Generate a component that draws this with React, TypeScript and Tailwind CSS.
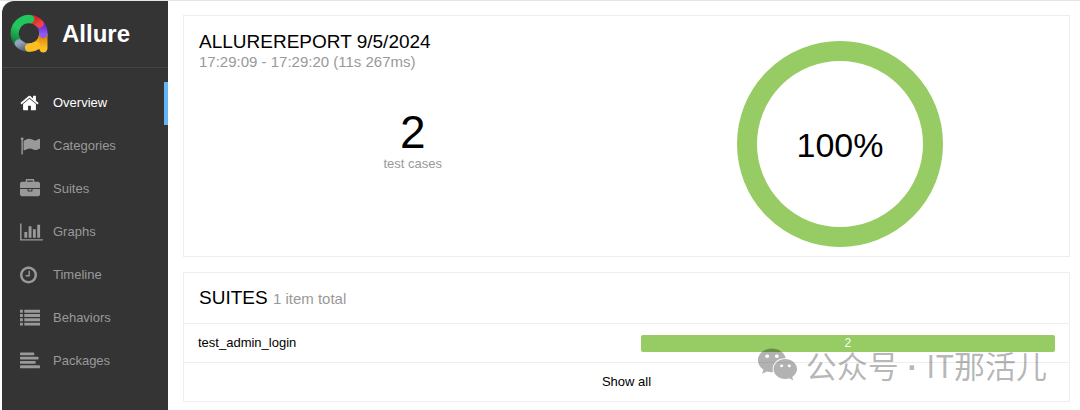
import React from 'react';
import { FaWeixin } from 'react-icons/fa';

interface NavItem {
  name: string;
  viewBox: string;
  width: string;
  path: string;
  active?: boolean;
}

const navItems: NavItem[] = [
  {
    name: 'Overview',
    viewBox: '64 0 1664 1792',
    width: 'w-[19px]',
    path: 'M1472 992v480q0 26-19 45t-45 19h-384v-384h-256v384h-384q-26 0-45-19t-19-45v-480q0-1 .5-3t.5-3l575-474 575 474q1 2 1 6zm223-69l-62 74q-8 9-21 11h-3q-13 0-21-7l-692-577-692 577q-12 8-24 7-13-2-21-11l-62-74q-8-10-7-23.5t11-21.5l719-599q32-26 76-26t76 26l244 204v-195q0-14 9-23t23-9h192q14 0 23 9t9 23v408l219 182q10 8 11 21.5t-7 23.5z',
    active: true,
  },
  {
    name: 'Categories',
    viewBox: '0 0 1792 1792',
    width: 'w-5',
    path: 'M320 256q0 72-64 110v1266q0 13-9.5 22.5t-22.5 9.5h-64q-13 0-22.5-9.5t-9.5-22.5v-1266q-64-38-64-110 0-53 37.5-90.5t90.5-37.5 90.5 37.5 37.5 90.5zm1472 64v763q0 25-12.5 38.5t-39.5 27.5q-215 116-369 116-61 0-123.5-22t-108.5-48-115.5-48-142.5-22q-192 0-464 146-17 9-33 9-26 0-45-19t-19-45v-742q0-32 31-55 21-14 79-43 236-120 421-120 107 0 200 29t219 88q38 19 88 19 54 0 117.5-21t110-47 88-47 54.5-21q26 0 45 19t19 45z',
  },
  {
    name: 'Suites',
    viewBox: '0 0 1792 1792',
    width: 'w-5',
    path: 'M640 256h512v-128h-512v128zm1152 640v480q0 66-47 113t-113 47h-1472q-66 0-113-47t-47-113v-480h672v160q0 26 19 45t45 19h320q26 0 45-19t19-45v-160h672zm-768 0v128h-256v-128h256zm768-480v384h-1792v-384q0-66 47-113t113-47h352v-160q0-40 28-68t68-28h576q40 0 68 28t28 68v160h352q66 0 113 47t47 113z',
  },
  {
    name: 'Graphs',
    viewBox: '0 0 2048 1792',
    width: 'w-[23px]',
    path: 'M640 896v512h-256v-512h256zm384-512v1024h-256v-1024h256zm1024 1152v128h-2048v-1536h128v1408h1920zm-640-896v768h-256v-768h256zm384-384v1152h-256v-1152h256z',
  },
  {
    name: 'Timeline',
    viewBox: '128 0 1536 1792',
    width: 'w-[17px]',
    path: 'M1024 544v448q0 14-9 23t-23 9h-320q-14 0-23-9t-9-23v-64q0-14 9-23t23-9h224v-352q0-14 9-23t23-9h64q14 0 23 9t9 23zm416 352q0-148-73-273t-198-198-273-73-273 73-198 198-73 273 73 273 198 198 273 73 273-73 198-198 73-273zm224 0q0 209-103 385.5t-279.5 279.5-385.5 103-385.5-103-279.5-279.5-103-385.5 103-385.5 279.5-279.5 385.5-103 385.5 103 279.5 279.5 103 385.5z',
  },
  {
    name: 'Behaviors',
    viewBox: '0 0 1792 1792',
    width: 'w-5',
    path: 'M0 1312h256v256H0zM0 928h256v256H0zM0 544h256v256H0zM0 160h256v256H0zM384 1312h1408v256H384zM384 928h1408v256H384zM384 544h1408v256H384zM384 160h1408v256H384z',
  },
  {
    name: 'Packages',
    viewBox: '0 0 1792 1792',
    width: 'w-5',
    path: 'M64 1280h1664q64 0 64 64v128q0 64-64 64H64q-64 0-64-64v-128q0-64 64-64zM64 896h1280q64 0 64 64v128q0 64-64 64H64q-64 0-64-64V960q0-64 64-64zM64 512h1536q64 0 64 64v128q0 64-64 64H64q-64 0-64-64V576q0-64 64-64zM64 128h1152q64 0 64 64v128q0 64-64 64H64q-64 0-64-64V192q0-64 64-64z',
  },
];

const AllureLogo: React.FC = () => (
  <svg viewBox="0 0 114 118" className="w-[38px] shrink-0" fill="none" strokeWidth="25" strokeLinecap="round" aria-hidden="true">
    <defs>
      <linearGradient id="green" x1="0" y1="1" x2="0.3" y2="0">
        <stop offset="0" stopColor="#15803d" />
        <stop offset="0.6" stopColor="#22c55e" />
      </linearGradient>
      <linearGradient id="red" x1="0" y1="0" x2="1" y2="1">
        <stop offset="0.3" stopColor="#dc2626" />
        <stop offset="1" stopColor="#ef4444" />
      </linearGradient>
      <linearGradient id="purple" x1="0" y1="0" x2="0" y2="1">
        <stop offset="0.2" stopColor="#6d28d9" />
        <stop offset="1" stopColor="#8b5cf6" />
      </linearGradient>
      <linearGradient id="gray" x1="0" y1="0" x2="1" y2="1">
        <stop offset="0" stopColor="#94a3b8" />
        <stop offset="1" stopColor="#58677d" />
      </linearGradient>
      <linearGradient id="stem" gradientUnits="userSpaceOnUse" x1="0" y1="60" x2="0" y2="102">
        <stop offset="0" stopColor="#d97706" />
        <stop offset="1" stopColor="#fbbf24" />
      </linearGradient>
    </defs>
    <path d="M99.8 61.7A43 43 0 0 1 57 101" stroke="#f5a313" />
    <path d="M100 62V103" stroke="url(#stem)" />
    <path d="M89 29.2A43 43 0 0 1 100 60" stroke="url(#purple)" />
    <path d="M60.7 15.2A43 43 0 0 1 89 29.2" stroke="url(#red)" />
    <path d="M21.8 82.7A43 43 0 0 1 60.7 15.2" stroke="url(#green)" />
    <path d="M26.6 88.4A43 43 0 0 0 57 101" stroke="url(#gray)" />
    <path d="M78.5 95.2A43 43 0 0 1 57 101" stroke="#fbbf24" />
  </svg>
);

const Sidebar: React.FC = () => (
  <aside className="ml-0.5 w-[166px] shrink-0 rounded-tl-xl bg-[#343434]">
    <div className="flex h-[67px] items-center gap-3.5 border-b border-[#444] pl-2">
      <AllureLogo />
      <span className="text-2xl font-bold text-white">Allure</span>
    </div>
    <nav className="pt-3.5">
      <ul>
        {navItems.map((item) => (
          <li key={item.name}>
            <a
              href="#"
              className={`flex h-[43px] items-center border-r-4 pb-0.5 pl-[18px] text-[13px] ${
                item.active ? 'border-[#64b5f6] text-white' : 'border-transparent text-[#999]'
              }`}
            >
              <span className="w-[33px]">
                <svg viewBox={item.viewBox} className={`h-5 ${item.width}`} fill="currentColor" aria-hidden="true">
                  <path d={item.path} />
                </svg>
              </span>
              {item.name}
            </a>
          </li>
        ))}
      </ul>
    </nav>
  </aside>
);

const SummaryCard: React.FC = () => (
  <section className="grid grid-cols-2 border border-[#eceff1] px-[15px] pt-3.5 pb-2">
    <div>
      <h2 className="text-[19px] leading-6">ALLUREREPORT 9/5/2024</h2>
      <p className="text-[15px] leading-4 text-[#999]">17:29:09 - 17:29:20 (11s 267ms)</p>
      <div className="mt-[38px] text-center">
        <div className="text-[46px] leading-12">2</div>
        <div className="text-[13px] leading-4 text-[#999]">test cases</div>
      </div>
    </div>
    <div className="flex justify-center pt-2.5">
      <svg viewBox="0 0 208 208" className="w-52" role="img" aria-label="100% passed">
        <circle cx="104" cy="104" r="93" fill="none" stroke="#97cc64" strokeWidth="20" />
        <text x="104" y="117" textAnchor="middle" className="text-[34px]">
          100%
        </text>
      </svg>
    </div>
  </section>
);

const SuitesCard: React.FC = () => (
  <section className="border border-[#eceff1] text-[13px]">
    <h2 className="flex h-[50px] items-center px-[15px] text-[19px]">
      <span>
        SUITES <small className="text-[15px] text-[#999]">1 item total</small>
      </span>
    </h2>
    <a href="#" className="grid h-[39px] grid-cols-2 items-center border-t border-[#eceff1]">
      <span className="px-3.5">test_admin_login</span>
      <span className="px-3.5">
        <span className="block rounded-xs bg-[#97cc64] text-center text-xs leading-[17px] text-white">2</span>
      </span>
    </a>
    <a href="#" className="block border-t border-[#eceff1] text-center leading-[38px]">
      Show all
    </a>
  </section>
);

const App: React.FC = () => {
  return (
    <div className="flex min-h-screen border-t border-[#e5e5e5] bg-white font-['Liberation_Sans',Arial,sans-serif] text-black">
      <Sidebar />
      <main className="relative flex flex-1 flex-col gap-[15px] pt-3.5 pr-2.5 pb-2 pl-[15px]">
        <SummaryCard />
        <SuitesCard />
        {/* Marca de agua sobre la tarjeta de suites */}
        <div className="pointer-events-none absolute right-[33px] bottom-6 flex items-center gap-2 text-black/30">
          <FaWeixin className="size-[41px]" />
          <span className="pt-1 font-['Noto_Sans_CJK_SC',sans-serif] text-[31px] leading-9 whitespace-pre">
            公众号<span className="font-['Liberation_Sans',sans-serif] font-bold"> · </span>IT那活儿
          </span>
        </div>
      </main>
    </div>
  );
};

export default App;
